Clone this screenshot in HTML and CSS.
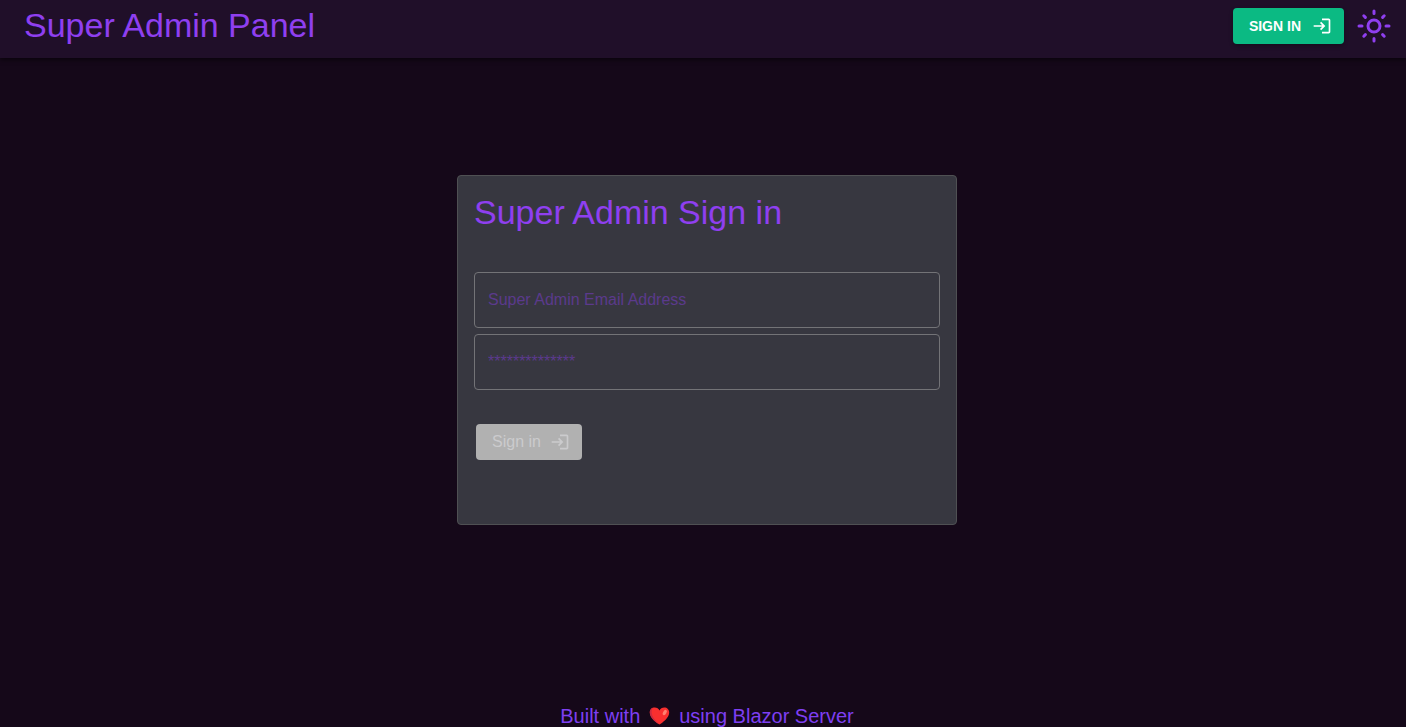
FILE: index.html
```html
<!DOCTYPE html>
<html lang="en">
<head>
<meta charset="utf-8">
<meta name="viewport" content="width=device-width, initial-scale=1">
<title>Super Admin Panel</title>
<link rel="stylesheet" href="styles.css">
</head>
<body>
<header class="appbar">
  <h1 class="title">Super Admin Panel</h1>
  <div class="actions">
    <button type="button" class="btn btn-primary">SIGN IN
      <svg class="icon" viewBox="0 0 24 24" fill="currentColor" aria-hidden="true"><path d="M11 7 9.600 8.400l2.600 2.600H2v2h10.200l-2.600 2.600L11 17l5-5-5-5zm9 12h-8v2h8c1.100 0 2-.9 2-2V5c0-1.100-.9-2-2-2h-8v2h8v14z"/></svg>
    </button>
    <button type="button" class="theme-toggle" aria-label="Toggle theme">
      <svg class="sun" viewBox="0 0 36 36" fill="none" stroke="currentColor" stroke-width="3" stroke-linecap="round" aria-hidden="true"><circle cx="18" cy="18" r="6"/><path d="M18 3v2.500M18 30.500V33M3 18h3M30 18H33M7.800 7.800l1.600 1.600M26.600 26.600l1.600 1.600M7.800 28.200l1.600-1.600M26.600 9.400l1.600-1.600"/></svg>
    </button>
  </div>
</header>
<main class="content">
  <form class="card">
    <h2 class="title">Super Admin Sign in</h2>
    <div class="fields">
      <input class="field" type="email" placeholder="Super Admin Email Address" aria-label="Super Admin Email Address">
      <input class="field" type="password" placeholder="**************" aria-label="Password">
    </div>
    <button type="submit" class="btn btn-disabled" disabled>Sign in
      <svg class="icon" viewBox="0 0 24 24" fill="currentColor" aria-hidden="true"><path d="M11 7 9.600 8.400l2.600 2.600H2v2h10.200l-2.600 2.600L11 17l5-5-5-5zm9 12h-8v2h8c1.100 0 2-.9 2-2V5c0-1.100-.9-2-2-2h-8v2h8v14z"/></svg>
    </button>
  </form>
</main>
<footer class="footer">
  <span>Built with</span>
  <svg class="heart" viewBox="0 0 20 18" role="img" aria-label="love"><path fill="#f92f2f" d="M10 17.500C7 15.800.5 11 .3 5.800.2 2.500 2.500.5 5.200.5 7.500.5 9.200 1.800 10 3.500 10.800 1.800 12.500.5 14.800.5c2.700 0 5 2 4.900 5.300C19.500 11 13 15.800 10 17.500z"/><path fill="#ca2a40" d="M.3 5.800C.1 3 1.500 1.300 3.200.8 1.500 3 1.700 7 3.500 10c1.700 3 4.500 5.500 6.500 7.500C6 15.300.5 11 .3 5.800z"/><ellipse cx="15.300" cy="5.500" rx="1.700" ry="2.900" fill="#ff8070" transform="rotate(30 15.300 5.500)"/></svg>
  <span>using Blazor Server</span>
</footer>
</body>
</html>
```
FILE: styles.css
```css
* {
  box-sizing: border-box;
}

body {
  margin: 0;
  height: 100vh;
  display: flex;
  flex-direction: column;
  overflow: hidden;
  background: #150819;
  color: #8f3ff0;
  font-family: "Liberation Sans", Arial, sans-serif;
}

.appbar {
  display: flex;
  justify-content: space-between;
  align-items: flex-start;
  padding: 4px 14px 12px 24px;
  background: #200f29;
  box-shadow: 0 2px 4px rgba(0, 0, 0, 0.5);
}

.title {
  margin: 0;
  font-size: 34px;
  line-height: 42px;
  font-weight: 400;
}

.actions {
  display: flex;
  align-items: center;
  gap: 12px;
  padding-top: 4px;
}

.btn {
  display: inline-flex;
  align-items: center;
  gap: 9px;
  height: 36px;
  padding: 0 12px 0 16px;
  border: 0;
  border-radius: 4px;
  font-family: inherit;
}

.btn-primary {
  gap: 11px;
  background: #0bba83;
  color: #fff;
  font-size: 14px;
  font-weight: 600;
  box-shadow: 0 2px 4px rgba(0, 0, 0, 0.3);
}

.btn-disabled {
  margin: 0 2px;
  background: #b1b1b1;
  color: #cbcbcd;
  font-size: 16px;
}

.icon {
  width: 20px;
  height: 20px;
}

.theme-toggle {
  padding: 0;
  border: 0;
  background: none;
  color: inherit;
}

.sun {
  display: block;
  width: 36px;
  height: 36px;
}

.content {
  flex: 1;
  padding: 117px 0 0 8px;
}

.card {
  max-width: 500px;
  min-height: 350px;
  margin: 0 auto;
  padding: 15px 16px;
  border: 1px solid #4f5053;
  border-radius: 4px;
  background: #373740;
}

.fields {
  display: grid;
  gap: 6px;
  margin: 39px 0 34px;
}

.field {
  width: 100%;
  height: 56px;
  padding: 0 13px;
  border: 1px solid #737377;
  border-radius: 4px;
  background: transparent;
  color: #8f3ff0;
  font-family: inherit;
  font-size: 16px;
}

.field::placeholder {
  color: #5b3a8c;
  opacity: 1;
}

.footer {
  display: flex;
  justify-content: center;
  align-items: center;
  gap: 9px;
  height: 22px;
  padding-left: 8px;
  font-size: 20px;
  line-height: 22px;
  color: #7e3ff2;
}

.heart {
  width: 21px;
  height: 18px;
}
```
